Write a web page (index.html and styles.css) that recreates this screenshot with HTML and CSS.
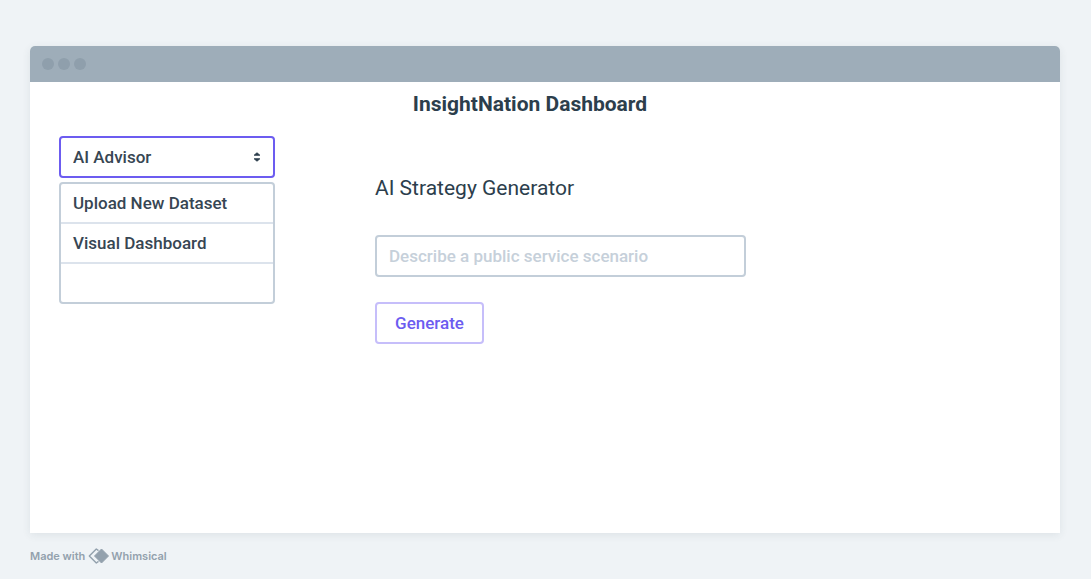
FILE: index.html
```html
<!DOCTYPE html>
<html lang="en">
<head>
<meta charset="utf-8">
<meta name="viewport" content="width=device-width, initial-scale=1">
<title>InsightNation Dashboard</title>
<link rel="stylesheet" href="styles.css">
</head>
<body>
<div class="window">
  <div class="titlebar">
    <span class="dot"></span><span class="dot"></span><span class="dot"></span>
  </div>
  <h1 class="title">InsightNation Dashboard</h1>
  <div class="layout">
    <nav class="sidebar" aria-label="Sections">
      <div class="picker">
        <select class="picker-select" aria-label="Section">
          <option>AI Advisor</option>
          <option>Upload New Dataset</option>
          <option>Visual Dashboard</option>
        </select>
        <svg class="picker-icon" width="8" height="10" viewBox="0 0 8 10" aria-hidden="true">
          <path d="M1.2 3.2 4 .8l2.800 2.400ZM1.200 6.800 4 9.200l2.800-2.400Z" fill="currentColor" stroke="currentColor" stroke-width="1" stroke-linejoin="round"/>
        </svg>
      </div>
      <ul class="menu">
        <li class="menu-row"><button class="menu-item" type="button">Upload New Dataset</button></li>
        <li class="menu-row"><button class="menu-item" type="button">Visual Dashboard</button></li>
        <li class="menu-row"></li>
      </ul>
    </nav>
    <main class="content">
      <h2 class="heading">AI Strategy Generator</h2>
      <input class="scenario" type="text" aria-label="Scenario" placeholder="Describe a public service scenario">
      <button class="generate" type="button">Generate</button>
    </main>
  </div>
</div>
<footer class="credit">
  <span>Made with</span>
  <svg class="credit-logo" width="22" height="16" viewBox="0 0 22 16" aria-hidden="true">
    <path d="M10.500 2.600 8.300 1 1.300 8l7 7 2.200-1.600" fill="none" stroke="currentColor" stroke-width="1.400" stroke-linejoin="round"/>
    <path d="M13.500 1 20.500 8l-7 7-7-7Z" fill="currentColor" stroke="currentColor" stroke-width="1" stroke-linejoin="round"/>
  </svg>
  <span>Whimsical</span>
</footer>
</body>
</html>
```

FILE: styles.css
```css
* {
  box-sizing: border-box;
}

body {
  display: flex;
  flex-direction: column;
  min-height: 100vh;
  margin: 0;
  padding: 46px 31px 15px 30px;
  background: #eff3f6;
  color: #2c3e4c;
  font-family: Roboto, "Liberation Sans", sans-serif;
}

.window {
  flex: 1;
  background: #fff;
  border-radius: 5px 5px 0 0;
  box-shadow: 0 2px 8px rgba(44, 62, 80, 0.09);
}

.titlebar {
  display: flex;
  align-items: center;
  gap: 4px;
  height: 36px;
  padding: 0 12px;
  background: #9eadb9;
  border-radius: 5px 5px 0 0;
}

.dot {
  width: 12px;
  height: 12px;
  background: #8f9fac;
  border-radius: 50%;
}

.title {
  margin: 0;
  padding: 8px 30px 0 0;
  font-size: 21px;
  line-height: 28px;
  font-weight: 700;
  text-align: center;
}

.layout {
  display: grid;
  grid-template-columns: 216px minmax(0, 371px);
  column-gap: 100px;
  padding: 18px 29px;
}

.picker {
  display: grid;
  align-items: center;
}

.picker-select,
.picker-icon {
  grid-area: 1 / 1;
}

.picker-select {
  appearance: none;
  width: 100%;
  height: 42px;
  padding: 0 12px;
  background: #fff;
  border: 2px solid #6c5cf0;
  border-radius: 4px;
  color: #374653;
  font: 500 17px/24px Roboto, sans-serif;
}

.picker-icon {
  justify-self: end;
  margin-right: 14px;
  pointer-events: none;
}

.menu {
  margin: 4px 0 0;
  padding: 0;
  border: 2px solid #c3ced9;
  border-radius: 4px;
  list-style: none;
}

.menu-row {
  height: 38px;
}

.menu-row + .menu-row {
  height: 40px;
  border-top: 2px solid #dce3ec;
}

.menu-item {
  width: 100%;
  height: 38px;
  padding: 0 12px;
  background: none;
  border: 0;
  color: #374653;
  font: 500 17px/24px Roboto, sans-serif;
  text-align: left;
}

.content {
  display: flex;
  flex-direction: column;
  align-items: flex-start;
  padding-top: 38px;
}

.heading {
  margin: 0 0 33px;
  font-size: 21px;
  line-height: 28px;
  font-weight: 400;
}

.scenario {
  width: 100%;
  height: 42px;
  margin-bottom: 25px;
  padding: 0 12px;
  background: #fff;
  border: 2px solid #c3ced9;
  border-radius: 4px;
  color: #374653;
  font: 500 17px/24px Roboto, sans-serif;
}

.scenario::placeholder {
  color: #c6d0da;
  opacity: 1;
}

.generate {
  width: 109px;
  height: 42px;
  padding: 0;
  background: #fff;
  border: 2px solid #c6befa;
  border-radius: 4px;
  color: #6c5cf0;
  font: 500 17px/24px Roboto, sans-serif;
}

.credit {
  display: flex;
  align-items: center;
  gap: 1px;
  margin-top: 15px;
  color: #93a1ad;
  font: 600 11px/16px Inter, sans-serif;
}

.credit-logo {
  margin-left: 2px;
}
```
